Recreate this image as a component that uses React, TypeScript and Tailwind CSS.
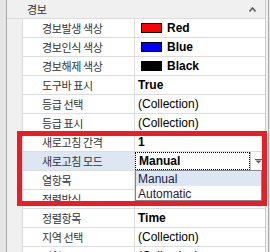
import React from "react";

const KR = { fontFamily: '"Noto Sans CJK KR", "Noto Sans", sans-serif', fontSize: "11px", letterSpacing: "-0.4px" } as React.CSSProperties;

type Row = { name: string; value?: React.ReactNode; selected?: boolean };

function Swatch({ color }: { color: string }) {
  return <span className="inline-block w-[21px] h-[10px] border border-black mr-[5px] ml-[3px]" style={{ background: color }} />;
}

const rows: Row[] = [
  { name: "경보발생 색상", value: <><Swatch color="#ff0000" /><b>Red</b></> },
  { name: "경보인식 색상", value: <><Swatch color="#0000ff" /><b>Blue</b></> },
  { name: "경보해제 색상", value: <><Swatch color="#000000" /><b>Black</b></> },
  { name: "도구바 표시", value: <b>True</b> },
  { name: "등급 선택", value: <span>(Collection)</span> },
  { name: "등급 표시", value: <span>(Collection)</span> },
  { name: "새로고침 간격", value: <b>1</b> },
  { name: "새로고침 모드", selected: true },
  { name: "열항목", value: null },
  { name: "정렬방식", value: null },
  { name: "정렬항목", value: <b>Time</b> },
  { name: "지역 선택", value: <span>(Collection)</span> },
  { name: "지역 표시", value: <span>(Collection)</span> },
];

export default function App() {
  return (
    <div className="relative w-[270px] h-[252px] overflow-hidden bg-[#f0f0f0] flex" style={{ fontFamily: '"Liberation Sans", Arial, sans-serif', fontSize: "12px" }}>
      <div className="w-[6px] bg-[#e6e6e6]" />
      <div className="w-px bg-[#a9a9a9]" />
      <div className="flex-1 flex flex-col">
        <div className="h-[19px] shrink-0 flex items-center pl-[20px] pr-[9px] border-b border-[#dcdcdc] text-[#333]">
          <span style={KR}>경보</span>
          <svg className="ml-auto" width="7" height="5" viewBox="0 0 7 5">
            <path d="M0.5 4.5 L3.5 1 L6.5 4.5" fill="none" stroke="#606060" strokeWidth="1.6" />
          </svg>
        </div>
        {rows.map((r, i) => (
          <div key={i} className="h-[19px] shrink-0 flex">
            <div className="w-[15px] shrink-0" />
            <div className={`w-[112px] shrink-0 border-l border-b border-[#dcdcdc] flex items-center pl-[19px] text-[#333] ${r.selected ? "bg-[#dde7f3]" : "bg-white"}`}>
              <span style={KR}>{r.name}</span>
            </div>
            <div className="w-px bg-[#dcdcdc]" />
            <div className="flex-1 bg-white border-b border-[#dcdcdc] flex items-center text-black relative">
              {r.selected ? (
                <div className="absolute inset-0 flex">
                  <div className="flex-1 border border-dotted border-black flex items-center pl-[3px]">
                    <b>Manual</b>
                  </div>
                  <div className="w-[15px] border-l border-[#c0c0c0] flex items-center justify-center">
                    <svg width="7" height="5" viewBox="0 0 7 5">
                      <rect x="0" y="0" width="7" height="1" fill="#606060" />
                      <path d="M0.5 1.5 L6.5 1.5 L3.5 4.5 Z" fill="#606060" />
                    </svg>
                  </div>
                </div>
              ) : (
                <div className="pl-[3px] flex items-center">{r.value}</div>
              )}
            </div>
          </div>
        ))}
      </div>
      <div className="w-px bg-[#cdcdcd]" />
      <div className="w-[2px] bg-[#f0f0f0]" />
      <div className="w-px bg-[#a9a9a9]" />
      <div className="w-px bg-[#e6e6e6]" />

      <div className="absolute left-[135px] top-[170px] w-[127px] h-[31px] bg-white border border-[#828790] flex flex-col text-[#1c1c3a]">
        <div className="h-[15px] bg-[#dde7f3] flex items-center pl-[2px]">Manual</div>
        <div className="h-[15px] flex items-center pl-[2px]">Automatic</div>
      </div>

      <div className="absolute left-[17px] top-[131px] w-[250px] h-[75px] border-[5px] border-[#ed1c24]" />
    </div>
  );
}
